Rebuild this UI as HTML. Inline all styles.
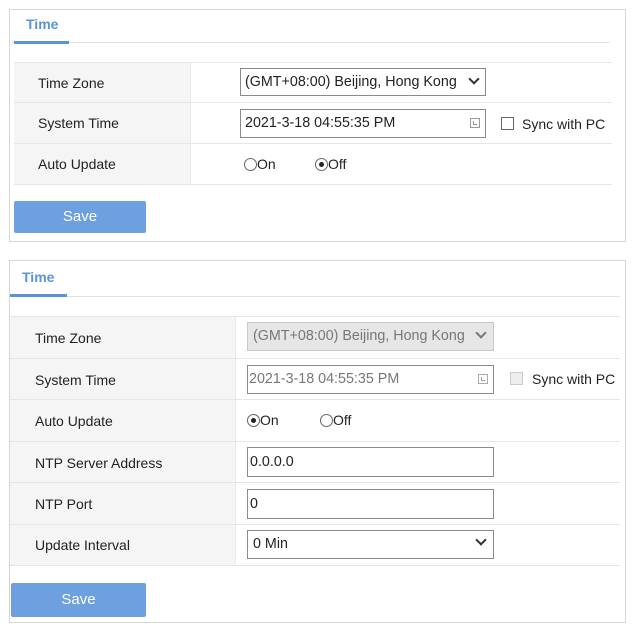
<!DOCTYPE html>
<html><head><meta charset="utf-8"><style>
*{box-sizing:border-box;margin:0;padding:0}
body{width:639px;height:630px;background:#fff;position:relative;font-family:"Liberation Sans",sans-serif;font-size:14px;color:#222;overflow:hidden}
.a{position:absolute}
.panel{border:1px solid #d6d6d6}
.tab{color:#5b93d8;font-weight:bold;font-size:14px}
.row{position:absolute;border-top:1px solid #e6e6e6}
.lab{position:absolute;left:0;top:0;bottom:0;background:#f5f5f5;border-right:1px solid #eaeaea}
.lt{position:absolute;top:50%;transform:translateY(-50%)}
.box{position:absolute;border:1px solid #8a8a8a;background:#fff;font-size:14.3px;line-height:26px;white-space:nowrap;overflow:hidden}
.btn{position:absolute;background:#6ea0e0;color:#fff;font-size:15px;text-align:center;border-radius:2px}
.rad{display:inline-block;width:13px;height:13px;border:1px solid #666;border-radius:50%;vertical-align:-2px;position:relative}
.rad.on::after{content:"";position:absolute;left:3px;top:3px;width:5px;height:5px;border-radius:50%;background:#222}
.cb{position:absolute;width:13px;height:13px;border:1px solid #666;background:#fff}
.chev{position:absolute;width:8px;height:8px;border-right:2px solid #333;border-bottom:2px solid #333;transform:rotate(45deg)}
.cal{position:absolute;width:10px;height:10px;border:1px solid #999}
.cal::after{content:"";position:absolute;left:2px;top:2px;width:3px;height:3px;border-left:1px solid #999;border-bottom:1px solid #999}
</style></head><body>

<div class="a panel" style="left:9px;top:9px;width:617px;height:233px"></div>
<div class="a tab" style="left:26px;top:16px">Time</div>
<div class="a" style="left:12px;top:42px;width:598px;height:1px;background:#e3e3e3"></div>
<div class="a" style="left:14px;top:41px;width:55px;height:3px;background:#5b93d8"></div>

<div class="row" style="left:14px;top:62px;width:598px;height:41px"><div class="lab" style="width:177px"></div><div class="lt" style="left:24px">Time Zone</div></div>
<div class="row" style="left:14px;top:102px;width:598px;height:41px"><div class="lab" style="width:177px"></div><div class="lt" style="left:24px">System Time</div></div>
<div class="row" style="left:14px;top:143px;width:598px;height:42px;border-bottom:1px solid #e6e6e6"><div class="lab" style="width:177px"></div><div class="lt" style="left:24px">Auto Update</div></div>

<div class="box" style="left:240px;top:68px;width:246px;height:28px;padding-left:4px">(GMT+08:00) Beijing, Hong Kong</div>
<div class="a" style="left:463px;top:69px;width:22px;height:26px;background:#fff"></div>
<div class="chev" style="left:470px;top:75px"></div>
<div class="box" style="left:240px;top:109px;width:246px;height:29px;padding-left:4px;line-height:27px">2021-3-18 04:55:35 PM</div>
<div class="cal" style="left:470px;top:118px"></div>
<div class="cb" style="left:501px;top:117px"></div>
<div class="a" style="left:522px;top:116px">Sync with PC</div>
<div class="a" style="left:244px;top:156px"><span class="rad"></span>On</div>
<div class="a" style="left:315px;top:156px"><span class="rad on"></span>Off</div>
<div class="btn" style="left:14px;top:201px;width:132px;height:32px;line-height:32px">Save</div>

<div class="a panel" style="left:9px;top:260px;width:617px;height:363px"></div>
<div class="a tab" style="left:22px;top:269px">Time</div>
<div class="a" style="left:10px;top:296px;width:610px;height:1px;background:#e3e3e3"></div>
<div class="a" style="left:10px;top:294px;width:57px;height:3px;background:#5b93d8"></div>

<div class="row" style="left:10px;top:316px;width:610px;height:42px"><div class="lab" style="width:226px"></div><div class="lt" style="left:25px">Time Zone</div></div>
<div class="row" style="left:10px;top:358px;width:610px;height:42px"><div class="lab" style="width:226px"></div><div class="lt" style="left:25px">System Time</div></div>
<div class="row" style="left:10px;top:399px;width:610px;height:42px"><div class="lab" style="width:226px"></div><div class="lt" style="left:25px">Auto Update</div></div>
<div class="row" style="left:10px;top:441px;width:610px;height:42px"><div class="lab" style="width:226px"></div><div class="lt" style="left:25px">NTP Server Address</div></div>
<div class="row" style="left:10px;top:482px;width:610px;height:42px"><div class="lab" style="width:226px"></div><div class="lt" style="left:25px">NTP Port</div></div>
<div class="row" style="left:10px;top:524px;width:610px;height:42px;border-bottom:1px solid #e6e6e6"><div class="lab" style="width:226px"></div><div class="lt" style="left:25px">Update Interval</div></div>

<div class="box" style="left:247px;top:322px;width:247px;height:29px;padding-left:5px;background:#e6e6e6;border-color:#c8c8c8;color:#777;line-height:27px">(GMT+08:00) Beijing, Hong Kong</div>
<div class="a" style="left:470px;top:323px;width:23px;height:27px;background:#e6e6e6"></div>
<div class="chev" style="left:477px;top:329px;border-color:#777"></div>
<div class="box" style="left:247px;top:365px;width:247px;height:29px;padding-left:1px;color:#777;line-height:27px">2021-3-18 04:55:35 PM</div>
<div class="cal" style="left:478px;top:374px;border-color:#aaa"></div>
<div class="cb" style="left:510px;top:372px;border-color:#ccc;background:#eee"></div>
<div class="a" style="left:532px;top:371px">Sync with PC</div>
<div class="a" style="left:247px;top:412px"><span class="rad on"></span>On</div>
<div class="a" style="left:320px;top:412px"><span class="rad"></span>Off</div>
<div class="box" style="left:247px;top:447px;width:247px;height:30px;padding-left:2px;line-height:28px">0.0.0.0</div>
<div class="box" style="left:247px;top:489px;width:247px;height:30px;padding-left:2px;line-height:28px">0</div>
<div class="box" style="left:247px;top:530px;width:247px;height:29px;padding-left:5px;line-height:27px">0 Min</div>
<div class="chev" style="left:477px;top:536px"></div>
<div class="btn" style="left:11px;top:583px;width:135px;height:34px;line-height:34px">Save</div>
</body></html>
